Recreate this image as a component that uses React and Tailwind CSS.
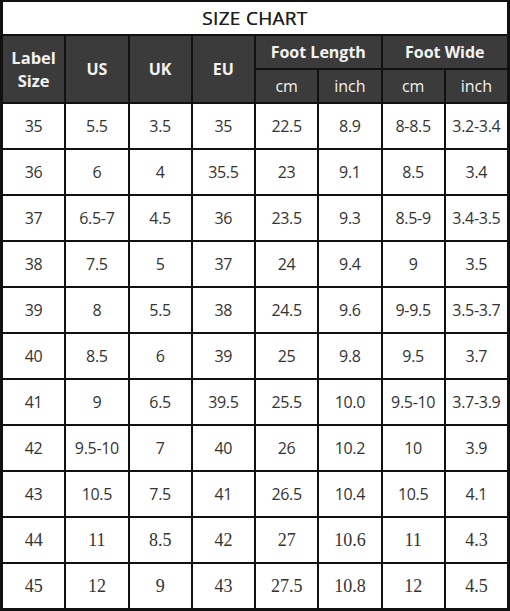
import React from 'react';

const rows = [
  ['35', '5.5', '3.5', '35', '22.5', '8.9', '8-8.5', '3.2-3.4'],
  ['36', '6', '4', '35.5', '23', '9.1', '8.5', '3.4'],
  ['37', '6.5-7', '4.5', '36', '23.5', '9.3', '8.5-9', '3.4-3.5'],
  ['38', '7.5', '5', '37', '24', '9.4', '9', '3.5'],
  ['39', '8', '5.5', '38', '24.5', '9.6', '9-9.5', '3.5-3.7'],
  ['40', '8.5', '6', '39', '25', '9.8', '9.5', '3.7'],
  ['41', '9', '6.5', '39.5', '25.5', '10.0', '9.5-10', '3.7-3.9'],
  ['42', '9.5-10', '7', '40', '26', '10.2', '10', '3.9'],
  ['43', '10.5', '7.5', '41', '26.5', '10.4', '10.5', '4.1'],
  ['44', '11', '8.5', '42', '27', '10.6', '11', '4.3'],
  ['45', '12', '9', '43', '27.5', '10.8', '12', '4.5'],
];

const sans = "font-['Open_Sans',sans-serif]";
const serif = "font-['Liberation_Serif',serif]";

const HeadCell = ({ children, className = '' }) => (
  <div className={`bg-[#3b3b3b] text-[#f2f2f2] flex items-center justify-center text-center ${className}`}>
    {children}
  </div>
);

export default function App() {
  return (
    <div className="w-[510px] h-[611px] bg-[#111] pt-[2px] pl-[3px] pr-[3px] pb-[3px]">
      <div
        className={`grid grid-cols-8 gap-[2px] h-full ${sans}`}
        style={{ gridTemplateRows: '32px 32px 32px repeat(11, 44px)' }}
      >
        <div className="col-span-8 bg-white flex items-center justify-center text-[19px] text-[#1e1e1e] tracking-[0.3px] [text-shadow:0_0_0.4px_#1e1e1e]">
          SIZE CHART
        </div>

        <HeadCell className="row-span-2 font-bold text-[16.5px] leading-[23px]">
          Label<br />Size
        </HeadCell>
        <HeadCell className="row-span-2 font-bold text-[16px]">US</HeadCell>
        <HeadCell className="row-span-2 font-bold text-[16px]">UK</HeadCell>
        <HeadCell className="row-span-2 font-bold text-[16px]">EU</HeadCell>
        <HeadCell className="col-span-2 font-bold text-[16px]">Foot Length</HeadCell>
        <HeadCell className="col-span-2 font-bold text-[16px]">Foot Wide</HeadCell>
        <HeadCell className="text-[16px] text-[#dcdcdc]">cm</HeadCell>
        <HeadCell className="text-[16px] text-[#dcdcdc]">inch</HeadCell>
        <HeadCell className="text-[16px] text-[#dcdcdc]">cm</HeadCell>
        <HeadCell className="text-[16px] text-[#dcdcdc]">inch</HeadCell>

        {rows.map((r, i) =>
          r.map((v, j) => (
            <div
              key={`${i}-${j}`}
              className={`bg-white flex items-center justify-center text-[#333] ${
                i >= 9 ? `${serif} text-[18px]` : 'text-[16px] tracking-[-0.3px]'
              }`}
            >
              {v}
            </div>
          ))
        )}
      </div>
    </div>
  );
}
